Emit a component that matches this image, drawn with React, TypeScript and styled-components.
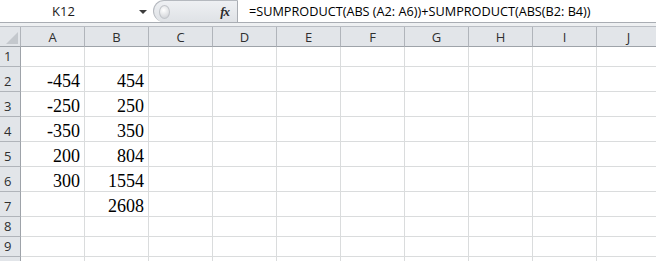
import styled, { createGlobalStyle } from "styled-components";

const GlobalStyle = createGlobalStyle`
  html, body {
    margin: 0;
    padding: 0;
    background: #ffffff;
    overflow: hidden;
  }
`;

const columns = ["A", "B", "C", "D", "E", "F", "G", "H", "I", "J"];

type Row = { n: number; h: number; label?: boolean; a?: string; b?: string };

const rows: Row[] = [
  { n: 1, h: 20 },
  { n: 2, h: 25, a: "-454", b: "454" },
  { n: 3, h: 25, a: "-250", b: "250" },
  { n: 4, h: 25, a: "-350", b: "350" },
  { n: 5, h: 25, a: "200", b: "804" },
  { n: 6, h: 25, a: "300", b: "1554" },
  { n: 7, h: 25, b: "2608" },
  { n: 8, h: 20 },
  { n: 9, h: 20 },
  // only a sliver of row 10 is visible, no label shows
  { n: 10, h: 20, label: false },
];

function App() {
  return (
    <>
      <GlobalStyle />
      <Page>
        <FormulaBar>
          <NameBox>
            <NameText>K12</NameText>
            <DropArrow />
          </NameBox>
          <FxArea>
            <Knob />
            <FxLabel>fx</FxLabel>
          </FxArea>
          <FormulaInput>=SUMPRODUCT(ABS (A2: A6))+SUMPRODUCT(ABS(B2: B4))</FormulaInput>
        </FormulaBar>
        <Band />
        <Sheet>
          <Corner>
            <svg width="12" height="12" viewBox="0 0 12 12">
              <polygon points="12,0 12,12 0,12" fill="#c4c8cd" />
            </svg>
          </Corner>
          {columns.map((c) => (
            <ColHead key={c}>{c}</ColHead>
          ))}
          {rows.map((r) => (
            <SheetRow key={r.n} $h={r.h}>
              <RowHead>{r.label === false ? "" : r.n}</RowHead>
              {columns.map((c) => (
                <Cell key={c}>
                  {c === "A" ? r.a : c === "B" ? r.b : null}
                </Cell>
              ))}
            </SheetRow>
          ))}
        </Sheet>
      </Page>
    </>
  );
}

export default App;

const Page = styled.div`
  width: 656px;
  height: 261px;
  overflow: hidden;
  font-family: "Open Sans", "Liberation Sans", sans-serif;
`;

const FormulaBar = styled.div`
  height: 22px;
  display: flex;
  border-bottom: 1px solid #a9adb3;
  background: #ffffff;
`;

const NameBox = styled.div`
  width: 153px;
  display: flex;
  align-items: center;
  position: relative;
`;

const NameText = styled.span`
  flex: 1;
  text-align: center;
  font-size: 13px;
  color: #1a1a1a;
  padding-right: 26px;
`;

const DropArrow = styled.span`
  position: absolute;
  right: 6px;
  top: 10px;
  width: 0;
  height: 0;
  border-left: 4px solid transparent;
  border-right: 4px solid transparent;
  border-top: 4px solid #3c3c3c;
`;

const FxArea = styled.div`
  width: 85px;
  display: flex;
  align-items: center;
  justify-content: space-between;
  background: linear-gradient(#eef0f3, #dfe2e6);
  border: 1px solid #b5b9bf;
  border-right: 1px solid #a9adb3;
  border-bottom: none;
  border-radius: 11px 0 0 11px;
  padding: 0 8px 0 5px;
  box-sizing: border-box;
`;

const Knob = styled.span`
  width: 9px;
  height: 12px;
  border-radius: 50%;
  background: radial-gradient(circle at 40% 35%, #ffffff, #c9ccd1);
  border: 1px solid #c2c5ca;
`;

const FxLabel = styled.span`
  font-family: "Liberation Serif", serif;
  font-style: italic;
  font-weight: bold;
  font-size: 13px;
  color: #2b2b2b;
  letter-spacing: -1px;
`;

const FormulaInput = styled.div`
  flex: 1;
  display: flex;
  align-items: center;
  padding-left: 11px;
  font-size: 12.7px;
  color: #000000;
  white-space: nowrap;
`;

const Band = styled.div`
  height: 3px;
  background: #eef0f2;
`;

const Sheet = styled.div`
  display: grid;
  grid-template-columns: 21px repeat(10, 64px);
  border-top: 1px solid #b9bdc3;
`;

const Corner = styled.div`
  height: 20px;
  background: #e2e5e9;
  border-right: 1px solid #b0b4ba;
  border-bottom: 1px solid #9ea3a9;
  box-sizing: border-box;
  display: flex;
  align-items: flex-end;
  justify-content: flex-end;
  padding: 0 2px 2px 0;
`;

const ColHead = styled.div`
  height: 20px;
  box-sizing: border-box;
  background: #e2e5e9;
  border-right: 1px solid #b0b4ba;
  border-bottom: 1px solid #9ea3a9;
  display: flex;
  align-items: center;
  justify-content: center;
  font-size: 13px;
  color: #2f2f2f;
`;

const SheetRow = styled.div<{ $h: number }>`
  display: contents;
  & > div {
    height: ${(p) => p.$h}px;
  }
`;

const RowHead = styled.div`
  box-sizing: border-box;
  background: #e2e5e9;
  border-right: 1px solid #9ea3a9;
  border-bottom: 1px solid #b0b4ba;
  display: flex;
  align-items: flex-end;
  padding: 0 0 1px 4px;
  font-size: 13px;
  color: #2f2f2f;
`;

const Cell = styled.div`
  box-sizing: border-box;
  border-right: 1px solid #dadcdd;
  border-bottom: 1px solid #dadcdd;
  display: flex;
  align-items: flex-end;
  justify-content: flex-end;
  padding: 0 4px 0 0;
  font-family: "Liberation Serif", serif;
  font-size: 18px;
  line-height: 20px;
  color: #000000;
`;
